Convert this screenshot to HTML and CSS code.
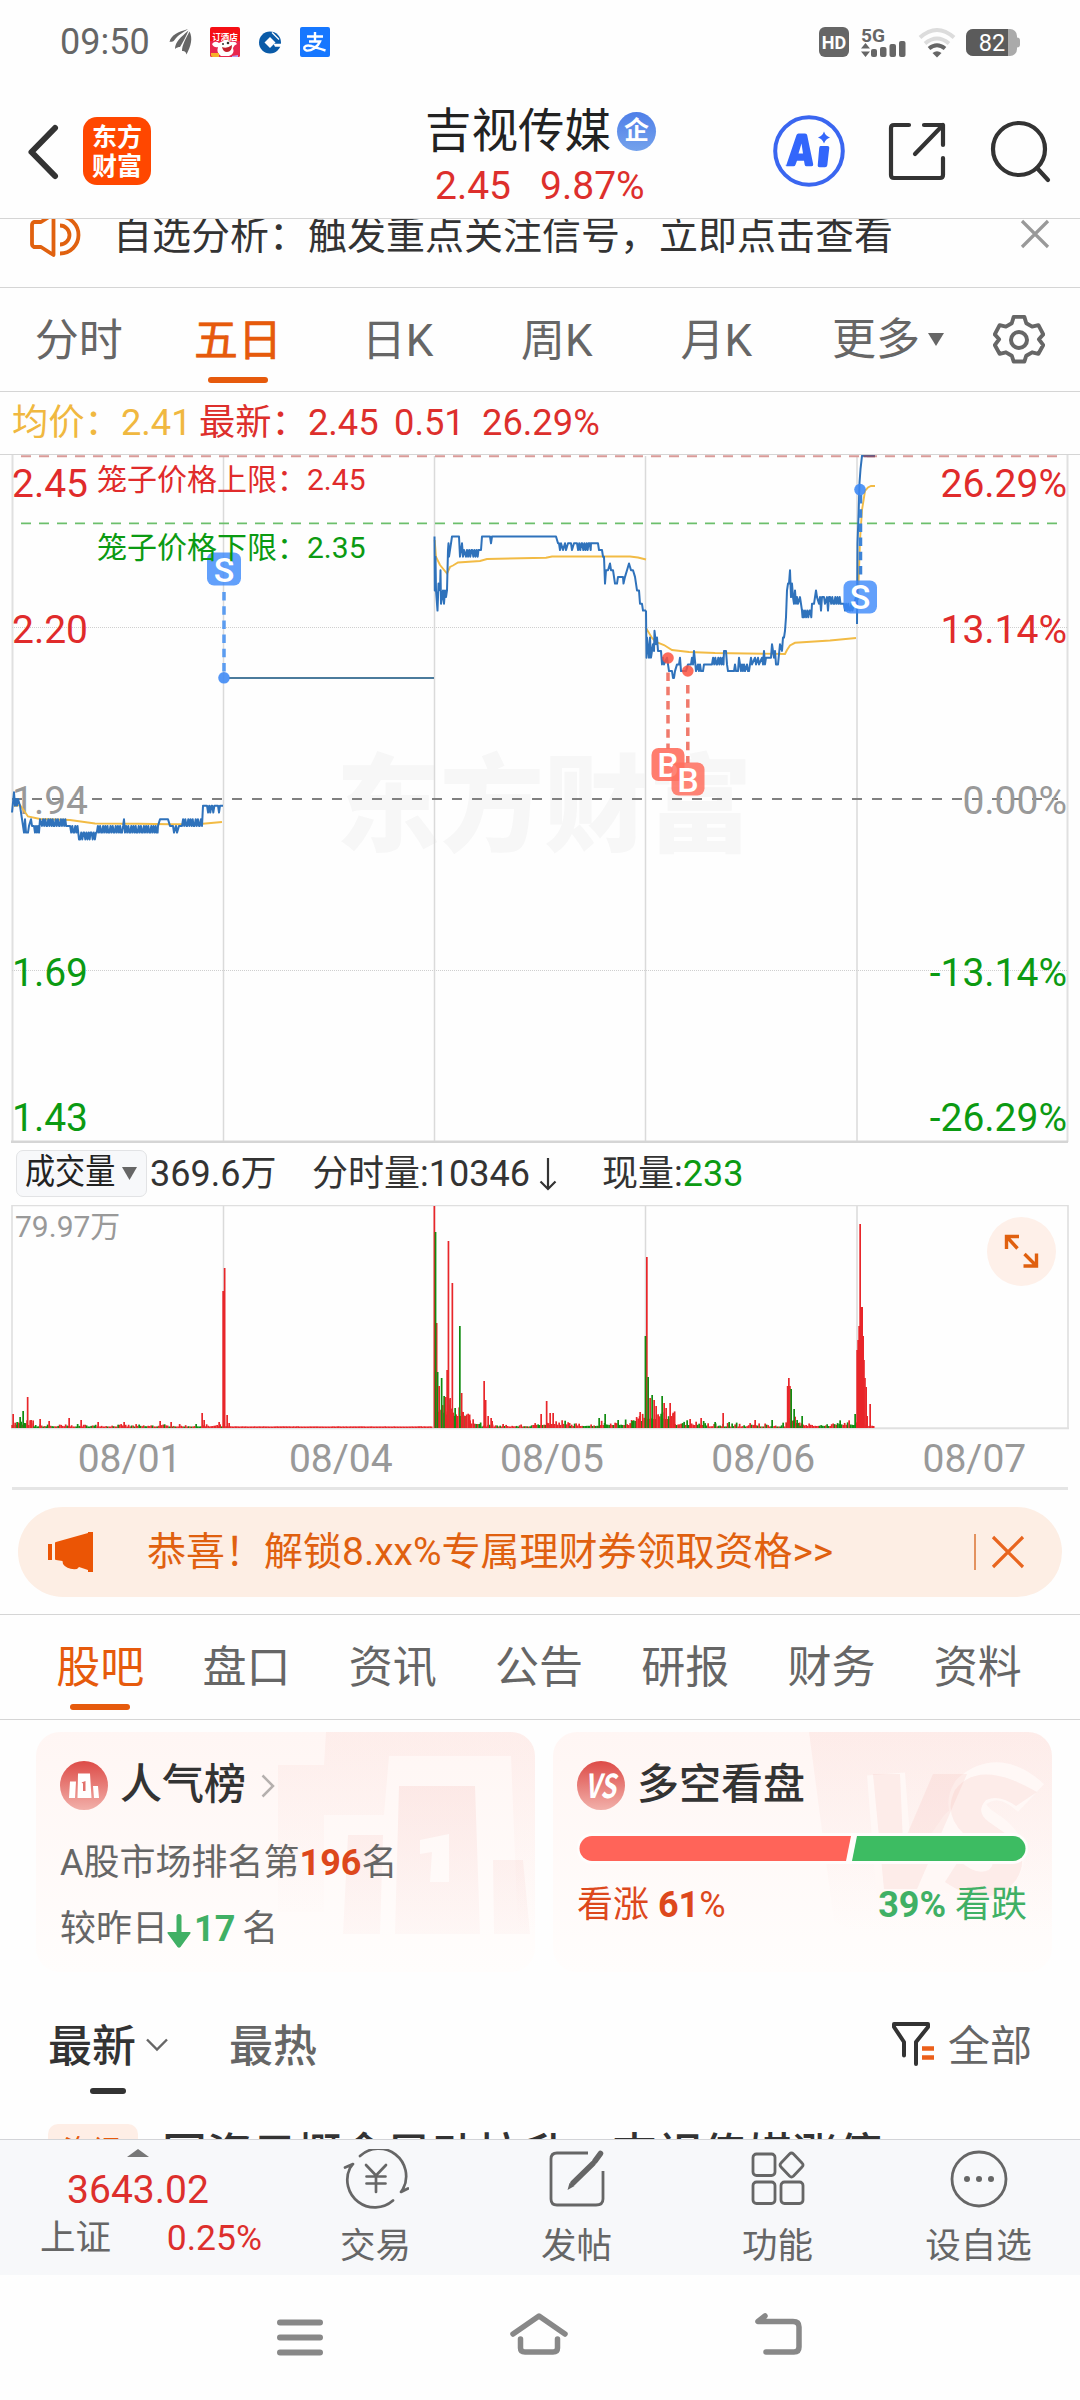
FILE: index.html
```html
<!DOCTYPE html>
<html lang="zh-CN">
<head>
<meta charset="utf-8">
<title>吉视传媒</title>
<link rel="stylesheet" href="styles.css">
</head>
<body>
<div class="status">
  <span class="clock">09:50</span>
  <svg class="ic-wing" width="24" height="26" viewBox="0 0 24 26"><g fill="#666"><path d="M.5 13C2 6 9 3 19 0C15 3 9 6 5.500 11C4 13.500 2 12.500 .5 13Z"/><path d="M6 20C6 13 12 8 19.500 1.500C17 8 14 13 11 18C9.500 18 7.500 18.500 6 20Z"/><path d="M13 22C13 16 17 9 20.500 2.500C24 9 22 17 17.500 25.500C17 23 15.500 21.500 13 22Z"/></g></svg>
  <svg class="ic-app" width="30" height="30" viewBox="0 0 30 30"><rect width="30" height="30" rx="2" fill="#f50f14"/><path d="M0 14h30v14a2 2 0 0 1-2 2H2a2 2 0 0 1-2-2z" fill="#e8274e"/><text x="15" y="13" text-anchor="middle" font-size="8.500" font-weight="700" fill="#fff" class="cjk">订酒店</text><path d="M2 17q3-4 7-1q6-4 12-1q5-1 6 2q-3 1-4 4q2 6-4 8h-8q-5-3-3-9q-4 1-6-3z" fill="#fff"/><path d="M12 20q5 2 10-2q0 7-5 7q-4 0-5-5z" fill="#c3202c"/><circle cx="13" cy="17" r="1" fill="#333"/><circle cx="18" cy="16" r="1.300" fill="#333"/><path d="M1 26h8v4H3a2 2 0 0 1-2-2z" fill="#f6b22a"/><path d="M22 29l6-1v2h-6z" fill="#b99bf0"/></svg>
  <svg class="ic-ccb" width="23" height="23" viewBox="0 0 23 23"><circle cx="11" cy="11.500" r="11" fill="#0a5ba8"/><path d="M11 6l5.500 5.500L11 17l-5.500-5.500z" fill="#fff"/><path d="M14.500 12.800H23v3h-7z" fill="#fff"/><path d="M13 1.500l7 7" stroke="#fff" stroke-width="1.200"/></svg>
  <svg class="ic-pay" width="30" height="30" viewBox="0 0 30 30"><rect width="30" height="30" rx="2" fill="#1677ff"/><path d="M7 9.500h16M15 5v9M9 14.500h11q-1.500 4-6 7q-4 2.500-7.500 2q-3-1-2-3.500q2-2.500 7-1q4 1.500 14 4.500" fill="none" stroke="#fff" stroke-width="2.400"/></svg>
  <div class="status-right">
    <span class="hd">HD</span>
    <svg width="45" height="31" viewBox="0 0 45 31"><text x="0" y="15" font-size="19" font-weight="700" fill="#666" textLength="24" lengthAdjust="spacingAndGlyphs">5G</text><g fill="#666"><path d="M0 21.500h9L4.500 16zM0 24.500h9L4.500 30z"/><rect x="10" y="22" width="6" height="8" rx="2"/><rect x="19" y="20" width="6.500" height="10" rx="2"/><rect x="28.500" y="17" width="6.500" height="13" rx="2"/><rect x="38" y="14" width="6.500" height="16" rx="2"/></g></svg>
    <svg width="38" height="31" viewBox="0 0 38 31"><g fill="none" stroke-width="4"><path d="M2 10.500q17-15 34 0" stroke="#dcdcdc"/><path d="M7 16.500q12-10 24 0" stroke="#dcdcdc"/><path d="M11 21.500q8-6.500 16 0" stroke="#666"/></g><path d="M14.500 26q4.500-3.500 9 0L19 30.500z" fill="#666"/></svg>
    <svg class="batt" width="54" height="28" viewBox="0 0 54 28"><rect width="51" height="27" rx="7" fill="#aaa"/><path d="M51 8.500q3 0 3 3v4q0 3-3 3z" fill="#aaa"/><path d="M7 0h35v27H7a7 7 0 0 1-7-7V7a7 7 0 0 1 7-7z" fill="#5b5b5b"/><text x="26" y="22" text-anchor="middle" font-size="23.500" fill="#fff">82</text></svg>
  </div>
</div>

<header class="head">
  <svg class="back" width="36" height="60" viewBox="0 0 36 60"><path d="M29 6L5.500 30L29 54" fill="none" stroke="#333" stroke-width="6" stroke-linecap="round" stroke-linejoin="round"/></svg>
  <div class="logo"><span>东方</span><span>财富</span></div>
  <div class="title">
    <div class="name">吉视传媒<i class="ent">企</i></div>
    <div class="quote"><span>2.45</span><span>9.87%</span></div>
  </div>
  <div class="tools">
    <svg width="72" height="72" viewBox="0 0 72 72"><circle cx="36" cy="36" r="33.800" fill="none" stroke="#3a66f0" stroke-width="4"/><path fill="#3366fb" fill-rule="evenodd" d="M13 51l10.500-31q.500-1.500 2-1.500h6.500q2 0 2.200 1.800l6 29q.300 2-1.700 2h-5q-1.500 0-1.800-1.500l-.700-4h-7l-1.500 4q-.500 1.500-2 1.500h-6q-2.500 0-1.500-2zM25.500 38.500h4.500l-1.500-10z"/><path d="M47.500 31h7q2 0 1.800 1.800l-2 17.500q-.300 2-2.300 2h-5.500q-2 0-1.800-1.800l1.500-17.500q.300-2 1.300-2zM51 16.500q1.500 4.500 6 6q-4.500 1.500-6 6q-1.500-4.500-6-6q4.500-1.500 6-6z" fill="#3366fb"/></svg>
    <svg width="60" height="60" viewBox="0 0 60 60"><g fill="none" stroke="#333" stroke-width="4.200" stroke-linecap="round" stroke-linejoin="round"><path d="M22 4H7q-3 0-3 3v47q0 3 3 3h46q3 0 3-3V37"/><path d="M37 4h19v20M56 4L28 33"/></g></svg>
    <svg width="62" height="64" viewBox="0 0 62 64"><circle cx="29" cy="29" r="26" fill="none" stroke="#333" stroke-width="4.200"/><path d="M47 48L58 60" stroke="#333" stroke-width="4.200" stroke-linecap="round"/></svg>
  </div>
</header>

<div class="notice">
  <svg width="52" height="52" viewBox="0 0 52 52"><g fill="none" stroke="#e0610f" stroke-width="3.800"><path d="M3 16q0-2 2-3h7L24.500 5v41L12 38H5q-2-1-2-3z" stroke-linejoin="round"/><path d="M31 16.500a9.500 9.500 0 0 1 0 19M31 7.500a18.500 18.500 0 0 1 0 37"/></g></svg>
  <p>自选分析：触发重点关注信号，立即点击查看</p>
  <svg class="x" width="30" height="30" viewBox="0 0 30 30"><path d="M2 2l26 26M28 2L2 28" stroke="#999" stroke-width="3.200"/></svg>
</div>

<nav class="periods">
  <a>分时</a><a class="on">五日</a><a>日K</a><a>周K</a><a>月K</a>
  <a class="more">更多<svg width="16" height="14" viewBox="0 0 16 14"><path d="M0 0h16L8 13z" fill="#666"/></svg></a>
  <svg class="gear" width="52" height="52" viewBox="0 0 52 52"><g fill="none" stroke="#666" stroke-width="4" stroke-linejoin="round"><path d="M20.500 3h11l2 6.500l6 3.500l6.500-1.500l5 9.500l-4.500 5l4.500 6l-5 9l-6.500-1.500l-6 3.500l-2 6h-11l-2-6l-6-3.500l-6.500 1.500l-5-9l4.500-6l-4.500-5l5-9.500l6.500 1.500l6-3.500z" transform="translate(.8 0) scale(.97)"/><circle cx="26" cy="26" r="8"/></g></svg>
</nav>

<div class="legend"><span class="avg">均价：2.41</span><span class="last">最新：2.45</span><span>0.51</span><span>26.29%</span></div>

<svg class="chart" width="1080" height="688" viewBox="0 455 1080 688">
  <text x="336" y="843" font-size="106" font-weight="900" fill="#f7f7f7" class="cjk" textLength="416" lengthAdjust="spacingAndGlyphs">东方财富</text>
  <g stroke="#dadada" stroke-width="1.500"><path d="M223.500 456v686M434.500 456v686M645.500 456v686M857 456v686"/></g>
  <path d="M12.500 455v687M1067.500 455v687" stroke="#e0e0e0" stroke-width="2"/>
  <path d="M12 627.500H1067M12 970.500H1067" stroke="#cfcfcf" stroke-dasharray="1 1"/>
  <path d="M11 1141.800H1068" stroke="#d5d5d5" stroke-width="2.400"/>
  <path d="M21 456.300H1058" stroke="#d99a98" stroke-width="2" stroke-dasharray="10 8"/>
  <path d="M21 523.300H1058" stroke="#6cbf6c" stroke-width="1.800" stroke-dasharray="10 8"/>
  <path d="M12 799H1058" stroke="#808080" stroke-width="1.800" stroke-dasharray="10 10"/>
  <g font-size="39">
    <g fill="#e02b2b"><text x="12" y="496.700">2.45</text><text x="12" y="642.700">2.20</text></g>
    <text x="12" y="813.700" fill="#999">1.94</text>
    <g fill="#0b9a12"><text x="12" y="986">1.69</text><text x="12" y="1131">1.43</text></g>
    <g text-anchor="end"><text x="1067" y="496.700" fill="#e02b2b">26.29%</text><text x="1067" y="642.700" fill="#e02b2b">13.14%</text><text x="1067" y="813.700" fill="#999">0.00%</text><text x="1067" y="986" fill="#0b9a12">-13.14%</text><text x="1067" y="1131" fill="#0b9a12">-26.29%</text></g>
  </g>
  <g fill="none" stroke="#f2bb45" stroke-width="1.900">
    <path d="M14 806L20 805L28 816.500L40 819L70 820L95 823.500L140 823.800L170 824.300L200 824L222 822"/>
    <path d="M434.700 540L436 557L440 565L447 573.500L450 567L453 565.500L458 562.500L480 561L487 559L546 557.700L552 556.500L630 556.500L638 557.500L646 559.500"/>
    <path d="M646 628L652 638L656 642L664 645L672 650L689 652L715 653L785 654L787 650L790 645.500L795 642.800L830 640.500L856 638"/>
    <path d="M858 600L860 540L862 510L865 491L868 487.500L871 486L875 486"/>
  </g>
  <path d="M229 678H434" stroke="#4b7b9c" stroke-width="2"/>
  <g id="price" fill="none" stroke="#2f72bb" stroke-width="2" stroke-linejoin="round"></g>
  <path d="M863.500 456.300H875" stroke="#83536f" stroke-width="2"/>
  <g stroke-width="3.500" stroke-dasharray="8.500 5.700"><path d="M224 592V674" stroke="#5b9cf0"/><path d="M860.500 495V580" stroke="#3d83d6"/><g stroke="#f07a6c"><path d="M668 672.500V749"/><path d="M687.800 685V763"/></g></g>
  <g fill="#3b88f5" fill-opacity=".88"><circle cx="224" cy="677.800" r="5.800"/><circle cx="860" cy="489.600" r="5.800"/></g>
  <g fill="#fb5240" fill-opacity=".85"><circle cx="668" cy="658" r="5.800"/><circle cx="687.800" cy="671" r="5.800"/></g>
  <g font-size="34" font-weight="500" text-anchor="middle" fill="#fff">
    <g fill-opacity=".8"><rect x="207" y="552.500" width="34" height="33" rx="7" fill="#3b88fa"/><rect x="843.500" y="580.500" width="33.500" height="33" rx="7" fill="#3b88fa"/></g>
    <text x="224" y="581.500">S</text><text x="860" y="609">S</text>
    <rect x="651.500" y="748" width="33" height="33" rx="7" fill="#ff6f5e" fill-opacity=".9"/><text x="668" y="777">B</text>
    <rect x="671.500" y="762.500" width="33" height="33" rx="7" fill="#ff6f5e" fill-opacity=".85"/><text x="688" y="791.500">B</text>
  </g>
  <g font-size="30"><text x="97" y="490" fill="#e02b2b">笼子价格上限：2.45</text><text x="97" y="557.800" fill="#0b9a12">笼子价格下限：2.35</text></g>
</svg>

<div class="volbar">
  <span class="pick"><b>成交量</b><svg width="15" height="13" viewBox="0 0 15 13"><path d="M0 0h15L7.500 13z" fill="#666"/></svg></span>
  <span class="v1">369.6万</span><span class="v2">分时量:10346</span><svg class="down" width="18" height="34" viewBox="0 0 18 34"><path d="M9 1v31M1.500 24.500L9 32l7.500-7.500" fill="none" stroke="#333" stroke-width="2.200"/></svg><span class="v3">现量:<em>233</em></span>
</div>

<svg class="chart" width="1080" height="225" viewBox="0 1205 1080 225">
  <path d="M223.500 1206v222M434.500 1206v222M645.500 1206v222M857 1206v222" stroke="#dadada" stroke-width="1.500"/>
  <path d="M12 1428.200V1205.500H1068V1428.200" fill="none" stroke="#dfdfdf" stroke-width="1.600"/>
  <path d="M11 1428.200H1069" stroke="#e0e0e0" stroke-width="2"/>
  <g id="volume"></g>
  <text x="15" y="1237.200" font-size="30" fill="#999">79.97万</text>
  <circle cx="1021.500" cy="1251.500" r="34.500" fill="#fef0e9"/>
  <path d="M1006.500 1249v-12.500h12.500M1007 1237l10.500 11.500M1036.500 1253.500v12.500h-13M1036 1265.500l-11.500-11.500" fill="none" stroke="#e0600f" stroke-width="3.400"/>
</svg>
<div class="dates"><span>08/01</span><span>08/04</span><span>08/05</span><span>08/06</span><span>08/07</span></div>

<div class="promo-wrap"><div class="promo">
  <svg width="46" height="40" viewBox="0 0 46 40"><path d="M0 12h4v16H0zM7 11q0-1 1-1L40 1V0h5v40h-5v-2l-9-3l-2 2q-10 1-14-5l-.500-3L8 28q-1 0-1-1z" fill="#eb5505"/></svg>
  <p>恭喜！解锁8.xx%专属理财券领取资格&gt;&gt;</p>
  <i></i>
  <svg class="x" width="34" height="34" viewBox="0 0 34 34"><path d="M2 2l30 30M32 2L2 32" stroke="#e8651f" stroke-width="3.200"/></svg>
</div></div>

<nav class="sections"><a class="on">股吧</a><a>盘口</a><a>资讯</a><a>公告</a><a>研报</a><a>财务</a><a>资料</a></nav>

<main class="feed">
  <div class="cards">
    <section class="card rank">
      <svg class="bg" width="258" height="240" viewBox="0 0 258 240"><defs><linearGradient id="fade" x2="0" y2="1"><stop offset="0" stop-color="#f2a8a0"/><stop offset="1" stop-color="#f2a8a0" stop-opacity="0"/></linearGradient><linearGradient id="fade2" gradientUnits="userSpaceOnUse" x1="0" y1="40" x2="0" y2="215"><stop offset="0" stop-color="#ee9a94"/><stop offset="1" stop-color="#ee9a94" stop-opacity=".25"/></linearGradient></defs><path d="M49 0H258V200H241L234 24H112L107 83H47V180H1V33H47z" fill="url(#fade)" fill-opacity=".11"/><g fill="url(#fade2)" fill-opacity=".17"><path d="M122 54H198L203 202H118zM143 108V122L155 120L153 150H172V102z" fill-rule="evenodd"/><path d="M71 103H106L103 202H66zM216 128H246L253 202H217z"/></g></svg>
      <h3><svg width="48" height="49" viewBox="0 0 48 49"><defs><linearGradient id="red" x2="0" y2="1"><stop offset="0" stop-color="#dd4b47"/><stop offset="1" stop-color="#f2b0aa"/></linearGradient></defs><ellipse cx="24" cy="24.500" rx="24" ry="24.500" fill="url(#red)"/><path d="M10 20.500h6L15 37H9zM18 12.500h12L31.500 37h-14zM33 25h5L39 37h-5z" fill="#fff"/><path d="M21.500 21.500l4-1.500v10h-2.500v-7.500z" fill="#e2716c"/></svg>人气榜<svg class="chev" width="14" height="24" viewBox="0 0 14 24"><path d="M1.500 1.500L12 12L1.500 22.500" fill="none" stroke="#b5b0ae" stroke-width="2.500"/></svg></h3>
      <p>A股市场排名第<b class="hot">196</b>名</p>
      <p>较昨日<svg class="fall" width="24" height="34" viewBox="0 0 24 34"><path d="M12 2.500V20" stroke="#40b065" stroke-width="5" stroke-linecap="round"/><path d="M1.500 18h21q2 0 .500 2L13.500 33q-1.500 1.500-3 0L1 20q-1.500-2 .500-2z" fill="#40b065"/></svg><b class="cold">17</b><span class="unit">名</span></p>
    </section>
    <section class="card vs">
      <svg class="bg" width="243" height="240" viewBox="0 0 243 240"><path d="M0 0H243V200H45L25 190z" fill="url(#fade)" fill-opacity=".13"/><g fill="none" stroke-linejoin="round" stroke="#fff8f6" stroke-width="38"><path d="M77 42L86 156L112 150L150 95L165 120L200 150"/><path d="M222 66Q190 36 162 60Q150 80 178 98Q206 116 192 138Q170 160 140 140"/></g><g fill="#ee9a94" fill-opacity=".13"><path d="M64 42H91L94 112L124 42H158L108 157H75z"/><path d="M228 60L207 74Q190 62 177 68Q166 80 180 90L200 104Q222 124 207 148Q180 180 136 150L150 128Q166 144 180 138Q190 128 176 116L155 102Q134 82 146 58Q170 26 228 60z"/></g></svg>
      <h3><svg width="48" height="49" viewBox="0 0 48 49"><ellipse cx="24" cy="24.500" rx="24" ry="24.500" fill="url(#red)"/><text x="23.500" y="37" text-anchor="middle" font-size="33" font-weight="700" font-style="italic" fill="#fff" textLength="31" lengthAdjust="spacingAndGlyphs" class="cjk">VS</text></svg>多空看盘</h3>
      <svg class="meter" width="451" height="31" viewBox="0 0 451 31"><rect width="451" height="31" rx="15.500" fill="#fffdfc"/><path d="M15 3H274L269 28H15A12.500 12.500 0 0 1 15 3z" fill="#ff6459"/><path d="M280 3H436A12.500 12.500 0 0 1 436 28H275z" fill="#3dbc62"/></svg>
      <div class="split"><span class="hot">看涨 <b>61</b>%</span><span class="cold"><b>39%</b> 看跌</span></div>
    </section>
  </div>
  <div class="sort">
    <span class="newest">最新</span><svg class="caret" width="24" height="14" viewBox="0 0 24 14"><path d="M2 1.500L12 11.500L22 1.500" fill="none" stroke="#666" stroke-width="2.400"/></svg>
    <span class="hottest">最热</span>
    <svg class="filter" width="44" height="46" viewBox="0 0 44 46"><path d="M13 34.500V21L3 6V3H37V6L25 21V43" fill="none" stroke="#333" stroke-width="4" stroke-linejoin="round" stroke-linecap="round"/><path d="M31 27.500h12M31 36.500h12" stroke="#eb5f1a" stroke-width="4.500"/></svg>
    <span class="all">全部</span>
  </div>
  <article class="post"><span class="tag">资讯</span><h4>国资云概念异动拉升，吉视传媒涨停</h4></article>
</main>

<footer class="dock">
  <div class="index"><svg width="22" height="8" viewBox="0 0 22 8"><path d="M0 8L11 0L22 8z" fill="#777"/></svg><strong>3643.02</strong><div class="idx"><span>上证</span><em>0.25%</em></div></div>
  <a><svg width="66" height="60" viewBox="0 0 66 60"><g fill="none" stroke="#666" stroke-width="2.700" stroke-linecap="round" stroke-linejoin="round"><path d="M17 7A27.500 27.500 0 0 1 60 40M60 40L58 43L65 39.500M50 51.500A27.500 27.500 0 0 1 7 19L10 15L2 18.500"/><path d="M23 16L33 26.500L43 16M33 26.500V43M23.500 27.500H42.500M23.500 34.500H42.500"/></g></svg>交易</a>
  <a><svg width="56" height="60" viewBox="0 0 56 60"><g fill="none" stroke="#666" stroke-width="2.800"><path d="M39 4H8Q2 4 2 10V50Q2 56 8 56H47Q54 56 54 50V22"/></g><path d="M46 12L51.500 4.500M24 34L44 14.500" stroke="#666" stroke-width="5.500" stroke-linecap="round"/><path d="M18.500 41l2-7l5 3z" fill="#666"/></svg>发帖</a>
  <a><svg width="56" height="60" viewBox="0 0 56 60"><g fill="none" stroke="#666" stroke-width="2.800"><rect x="3" y="5" width="22" height="21.500" rx="3.500"/><rect x="3" y="33" width="22" height="21.500" rx="3.500"/><rect x="31" y="33" width="22" height="21.500" rx="3.500"/><path d="M39.500 5Q41.500 3 43.500 5L52 14Q54 16 52 18L43.500 27Q41.500 29 39.500 27L31 18Q29 16 31 14z"/></g></svg>功能</a>
  <a><svg width="60" height="60" viewBox="0 0 60 60"><circle cx="30" cy="30" r="27" fill="none" stroke="#666" stroke-width="2.800"/><g fill="#666"><circle cx="18" cy="30" r="3"/><circle cx="30" cy="30" r="3"/><circle cx="42" cy="30" r="3"/></g></svg>设自选</a>
</footer>
<div class="sysnav">
  <svg width="46" height="40" viewBox="0 0 46 40"><path d="M3 5.500H43M3 20.500H43M3 35.500H43" stroke="#888" stroke-width="6" stroke-linecap="round"/></svg>
  <svg width="60" height="46" viewBox="0 0 60 46"><g fill="none" stroke="#888" stroke-width="5.500" stroke-linecap="round" stroke-linejoin="round"><path d="M4 23L30 5L56 23"/><path d="M11.500 28V37Q11.500 41 16 41H44Q48.500 41 48.500 37V28"/></g></svg>
  <svg width="50" height="46" viewBox="0 0 50 46"><path d="M12 5L5 10.500H40Q46 10.500 46 16V36Q46 41 41 41H13" fill="none" stroke="#888" stroke-width="5.500" stroke-linecap="round" stroke-linejoin="round"/></svg>
</div>
<script src="charts.js"></script>
</body>
</html>
```
FILE: styles.css
```css
* { box-sizing: border-box; margin: 0; padding: 0; }
body { width: 1080px; height: 2400px; overflow: hidden; background: #fefefe; color: #333; font-family: Roboto, "Noto Sans CJK SC", sans-serif; line-height: 1.2; display: flex; flex-direction: column; }
body > * { flex: none; }
svg { display: block; flex: none; }
em, i { font-style: normal; }
.cjk { font-family: "Noto Sans CJK SC", sans-serif; }

.status { height: 84px; padding: 0 60px; display: flex; align-items: center; color: #666; }
.clock { font-size: 36px; line-height: 44px; width: 109px; }
.ic-app { margin-left: 17px; }
.ic-ccb { margin-left: 19px; }
.ic-pay { margin-left: 18px; }
.status-right { margin-left: auto; display: flex; align-items: center; gap: 12px; }
.batt { margin: 2px 0 0 -2px; }
.hd { width: 30px; height: 30px; border-radius: 6px; background: #666; color: #fff; font: 700 18px/31px Roboto, sans-serif; text-align: center; }

.head { height: 135px; border-bottom: 1.500px solid #d5d5d5; display: flex; align-items: flex-start; position: relative; }
.back { margin: 38px 0 0 26px; }
.logo { margin: 33px 0 0 21px; width: 68px; height: 68px; border-radius: 14px; background: #ff4700; color: #fff; font: 700 25px/29px "Noto Sans CJK SC", sans-serif; display: flex; flex-direction: column; align-items: center; padding-top: 4px; }
.title { margin-left: 274px; width: 240px; padding-top: 18px; }
.name { font-size: 46.500px; line-height: 58px; color: #222; display: flex; align-items: center; white-space: nowrap; }
.ent { margin-left: 6px; flex: none; width: 39px; height: 39px; border-radius: 50%; background: linear-gradient(#4f7fe8, #74a2ec); color: #fff; font-size: 25px; font-weight: 700; line-height: 38px; text-align: center; }
.quote { font-size: 39px; line-height: 46px; color: #dd2f2c; display: flex; gap: 29px; padding: 3px 0 0 10px; }
.tools { margin-left: 108px; display: flex; width: 282px; }
.tools svg:nth-child(1) { margin-top: 31px; }
.tools svg:nth-child(2) { margin: 37px 0 0 42px; }
.tools svg:nth-child(3) { margin: 36px 0 0 43px; }

.notice { height: 69px; border-bottom: 1.500px solid #d5d5d5; overflow: hidden; display: flex; align-items: flex-start; padding-left: 29px; }
.notice p { font-size: 39px; line-height: 56px; margin: -11px 0 0 32px; width: 784px; white-space: nowrap; }
.notice > svg:first-child { margin-top: -10px; }
.notice .x { margin-left: 123px; }

.periods { height: 104px; border-bottom: 1.500px solid #d5d5d5; display: flex; align-items: center; font-size: 44px; color: #666; }
.periods a { width: 159.400px; height: 103px; line-height: 106px; text-align: center; position: relative; left: -1px; }
.periods .on, .sections .on { color: #e65a0c; }
.periods .on { -webkit-text-stroke: .7px #e65a0c; }
.on::after { content: ""; position: absolute; left: 50%; bottom: 8px; width: 60px; height: 6px; margin-left: -30px; border-radius: 3px; background: #e65a0c; }
.periods .more { display: flex; align-items: center; width: 196px; padding-left: 36px; gap: 8px; }

.legend { height: 63px; border-bottom: 1.500px solid #d5d5d5; padding-left: 12px; display: flex; align-items: baseline; font-size: 36.300px; line-height: 62px; color: #dd2f2c; }
.legend .avg { color: #f0b840; width: 187px; }
.legend .last { width: 195px; }
.legend span:nth-child(3) { width: 88px; }

.volbar { height: 62px; display: flex; align-items: center; font-size: 36px; line-height: 44px; padding: 0 0 1px 16px; }
.volbar > span { height: 44px; }
.volbar > .pick { width: 131px; height: 47px; border: 1.500px solid #e2e3e5; border-radius: 7px; background: #f7f8fa; display: flex; align-items: center; padding-left: 8px; margin-top: -1px; }
.pick b { font-weight: 400; font-size: 35px; line-height: 44px; color: #222; transform: scaleX(.86); transform-origin: 0 50%; width: 97px; white-space: nowrap; }
.v1 { margin-left: 3px; width: 162px; }
.down { margin: 0 45px 0 9px; }
.v2 { width: 218px; }
.v3 em { color: #0b9a12; }

.dates { height: 60px; margin: 0 12px; border-bottom: 3px solid #e5e5e5; display: grid; grid-template-columns: repeat(5, 1fr); text-align: center; font-size: 39px; line-height: 59px; color: #999; }
.dates span { padding-left: 24px; }

.promo-wrap { height: 124px; padding: 17px 18px 0; }
.promo { height: 90px; border-radius: 45px; background: #fdeee4; color: #e0600f; display: flex; align-items: center; padding-left: 30px; }
.promo p { margin-left: 53px; width: 827px; font-size: 39px; line-height: 60px; height: 60px; white-space: nowrap; }
.promo i { width: 2px; height: 36px; background: #e3925f; }
.promo .x { margin-left: 15px; }

.sections { height: 106px; border-top: 1.500px solid #d5d5d5; border-bottom: 1.500px solid #d5d5d5; padding: 0 29px 0 27px; display: flex; font-size: 44px; color: #666; }
.sections a { flex: 1; text-align: center; line-height: 107px; position: relative; }
.sections .on::after { bottom: 9px; }

.feed { height: 419px; overflow: hidden; }
.cards { display: flex; gap: 18px; padding: 12px 28px 0 36px; }
.card { width: 499px; height: 240px; border-radius: 24px; overflow: hidden; position: relative; background: linear-gradient(#fff6f4, #fffdfc); padding: 29px 24px 0; font-size: 36px; color: #666; }
.bg { position: absolute; right: 0; top: 0; }
.card > :not(.bg) { position: relative; }
.card h3 { display: flex; align-items: center; height: 49px; font-size: 42px; font-weight: 500; color: #333; gap: 12px; }
.chev { margin-left: 3px; }
.rank p { height: 66px; line-height: 66px; display: flex; align-items: center; }
.rank h3 + p { margin-top: 20px; }
.fall { margin: 4px 3px 0 -1px; }
.cold { color: #40b065; }
.hot { color: #dd481c; }
.unit { margin-left: 7px; }
.meter { margin: 23px 0 0; }
.split { display: flex; justify-content: space-between; margin-top: 17px; padding: 0 1px 0 0; line-height: 48px; }
.sort { height: 150px; display: flex; align-items: flex-start; padding: 43px 0 0 48px; font-size: 44px; line-height: 64px; position: relative; }
.newest { font-weight: 500; width: 97px; }
.newest::after { content: ""; position: absolute; left: 90px; top: 116px; width: 36px; height: 6px; border-radius: 3px; background: #333; }
.caret { margin-top: 23px; }
.hottest { margin-left: 60px; font-weight: 500; color: #666; width: 662px; }
.filter { margin-top: 6px; }
.all { color: #666; font-size: 42px; margin-left: 13px; }
.post { display: flex; padding-left: 48px; }
.tag { width: 90px; height: 44px; margin-top: 2px; border-radius: 10px; background: #feeee6; color: #e65a0c; font-size: 30px; line-height: 54px; text-align: center; }
.post h4 { font-weight: 500; font-size: 45px; line-height: 60px; margin: 4px 0 0 24px; white-space: nowrap; }

.dock { height: 136px; background: #f7f8fa; border-top: 1.500px solid #d3d4d8; display: flex; color: #666; font-size: 35.500px; }
.dock a { width: 201px; padding-top: 9px; display: flex; flex-direction: column; align-items: center; line-height: 52px; gap: 11px; position: relative; left: -1px; }
.index { width: 276px; padding-top: 9px; display: flex; flex-direction: column; align-items: center; }
.index strong { font-weight: 400; font-size: 39px; line-height: 46px; margin-top: 10px; color: #dd2f2c; }
.idx { width: 222px; display: flex; justify-content: space-between; font-size: 35.500px; line-height: 51px; margin-left: 26px; }
.idx em { color: #dd2f2c; }
.sysnav { height: 126px; display: flex; justify-content: space-between; align-items: flex-start; padding: 0 277px; }
.sysnav svg:nth-child(1) { margin-top: 42px; }
.sysnav svg:nth-child(2) { margin: 36px 0 0 2px; }
.sysnav svg:nth-child(3) { margin-top: 36px; }
```
FILE: charts.js
```js
// Price polylines: pairs of "x,cents"; "~x,a,b" swings between a and b up to x.
const days = [
  "12,192 14,195 15,193 16,194 17,193 18,194 20,193 21,192 22,191 23,190 24,189 25,191 26,189 28,189 29,190 31,191 32,190 34,190 35,189 36,190 37,189 38,190 39,189 40,191 42,190 ~67,191,190 69,190 ~77,190,189 79,188 ~96,188,189 ~123,190,189 124,191 125,189 ~143,190,189 145,189 ~157,190,189 158,190 160,191 168,191 170,190 173,190 174,189 176,190 177,189 179,190 182,190 ~200,191,190 202,190 203,193 207,193 ~214,192,193 218,193 219,192 220,193 223,193",
  "434.5,233 434.8,225 435.5,230 436,225 437.5,222 438.5,226 440,225 440.5,228 441,223 443,225 444,223 445,225 446,224 447,225 448,231 448.5,232 449,230 451,232 452,233 459,233 460,230 462,232 463,230 464,231 466,230 467,231 ~477,230,231 479,231 481,231 482,233 490,233 491,232 492,233 556,233 558,232 559,232 560,231 561,232 563,231 565,232 566,231 568,232 571,232 572,231 574,232 577,232 ~590,231,232 591,232 598,232 599,231 602,231 603,230 604,230 605,226 606,228 608,228 610,229 611,228 613,228 614,227 615,226 617,226 618,227 623,227 623.5,226 625,227 627,228 629,229 631,228 633,228 635,227 636,226 637,225 639,225 640,223 642,223 643,222 646,222",
  "646,222 646.5,215 647,218 649,215 650,218 651,215 653,217 654,216 654.5,219 656,217 657,218 658,216 661,216 662,214 663,215 664,214 667,215 668,214 669,213 672,213 673,212 674,212 675,213 677,214 679,214 680,215 681,213 686,213 688,214 691,214 692,215 693,214 694,216 696,213 698,214 699,213 700,214 701,213 703,213 704,214 712,214 ~722,215,214 724,216 726,216 727,214 728,213 734,213 735,214 736,213 738,213 739,215 741,213 742,214 743,213 744,214 745,213 747,214 748,213 749,213 751,215 752,214 755,215 756,214 758,215 759,214 762,215 763,214 764,216 765,214 766,215 771,215 772,217 773,216 774,215 775,216 776,214 778,214 780,217 782,216 783,218 784,218 785,219 786,221 787,225 788,226 789,226 790,228 791,224 792,226 793,224 794,223 795,225 796,223 797,224 798,223 800,224 802,222 802.5,221 803,222 804,221 805,222 ~811,221,222 812,223 814,223 815,224 816,225 817,224 819,223 820,224 821,222 822,224 824,224 825,223 827,224 828,222 829,224 ~841,224,223 844,223 845,222 ~852,223,222 856,224",
  "857,220 857.5,232 858.5,236 859.5,241 860.5,243 862,245 875,245"
];
const priceLayer = document.getElementById("price");
for (const day of days) {
  const pts = [];
  let x = 0;
  for (const token of day.split(" ")) {
    const v = token.replace("~", "").split(",").map(Number);
    if (token[0] === "~") {
      for (let i = 0; x < v[0]; i++) { x += 1.1; pts.push([x, i % 2 ? v[2] : v[1]]); if (i % 5 === 3) { x += 0.8; pts.push([x, v[2]]); } }
    } else { x = v[0]; pts.push([x, v[1]]); }
  }
  const line = document.createElementNS("http://www.w3.org/2000/svg", "polyline");
  line.setAttribute("points", pts.map(([px, c]) => `${px.toFixed(1)},${(799 - (c - 194) * 6.73).toFixed(1)}`).join(" "));
  priceLayer.append(line);
}

// Volume bars: x, height, r = up / g = down.
const volumeLayer = document.getElementById("volume");
const bar = (x, h, c) => {
  const r = document.createElementNS("http://www.w3.org/2000/svg", "rect");
  r.setAttribute("x", x - 0.7); r.setAttribute("y", 1428 - h);
  r.setAttribute("width", 1.7); r.setAttribute("height", h);
  r.setAttribute("fill", c === "g" ? "#118c11" : "#e8262a");
  volumeLayer.append(r);
};
let seed = 7;
const rnd = () => (seed = (seed * 16807) % 2147483647) / 2147483647;
const fill = (a, b, lo, hi, green) => { for (let x = a; x < b; x += 1.5) bar(x, lo + rnd() ** 3 * (hi - lo), rnd() < green ? "g" : "r"); };
fill(12, 34, 3, 9, .5); fill(34, 223, 1.5, 4, .35); fill(223, 433, 1.5, 1.8, 0);
fill(435, 470, 12, 30, .4); fill(470, 482, 4, 9, .3); fill(482, 535, 1.5, 3.5, .3); fill(535, 570, 3, 9, .3);
fill(570, 600, 2, 5, .5); fill(600, 632, 3, 9, .4); fill(632, 646, 7, 15, .5); fill(646, 675, 9, 18, .5);
fill(675, 705, 3, 8, .4); fill(705, 786, 1.5, 6, .45); fill(786, 800, 5, 14, .5); fill(800, 840, 2, 5, .5);
fill(840, 857, 3, 8, .5); fill(866, 875, 2, 4, 0);
"13:14r 17:6g 20:11g 23:17g 27.5:31r 31:8r 40:9r 49:7r 69:10r 81:8r 98:6r 124:6r 160:7r 171:6r 202:15r 204:8r 219:6r 223:137r 224.5:160r 227:13r 229:5r 434.2:222r 436.5:105r 435.4:196g 437.5:56g 439:42r 441.5:50g 444:32g 445.5:31r 447:58r 448.3:187r 450:30r 452.2:145r 455:20g 459.7:102g 461.5:35r 463:16r 465:12r 484:47r 485.5:28r 488:12r 491:10r 492:7r 503:4r 541:14r 546.5:27r 550:15r 553:15r 599:10g 605:14g 640:16r 646.7:171r 645.3:92g 648:51g 650:30r 652:33g 654:28r 656:22r 662:32g 664:25r 666:20r 670:25r 673:14r 690:9r 701:10r 715:6g 723:15r 729:6g 755:8r 772:8g 787.5:42r 788.7:50r 789.8:42r 791:39g 794:19g 797:8g 802:12g 855:14g 857:78r 858:88r 859:102r 860:204r 861:121r 862:121r 863:92r 863.8:68r 864.8:50r 866:41r 867:12r 870:24r".split(" ").forEach(t => {
  const [x, v] = t.split(":");
  bar(+x, parseFloat(v), v.slice(-1));
});
```
